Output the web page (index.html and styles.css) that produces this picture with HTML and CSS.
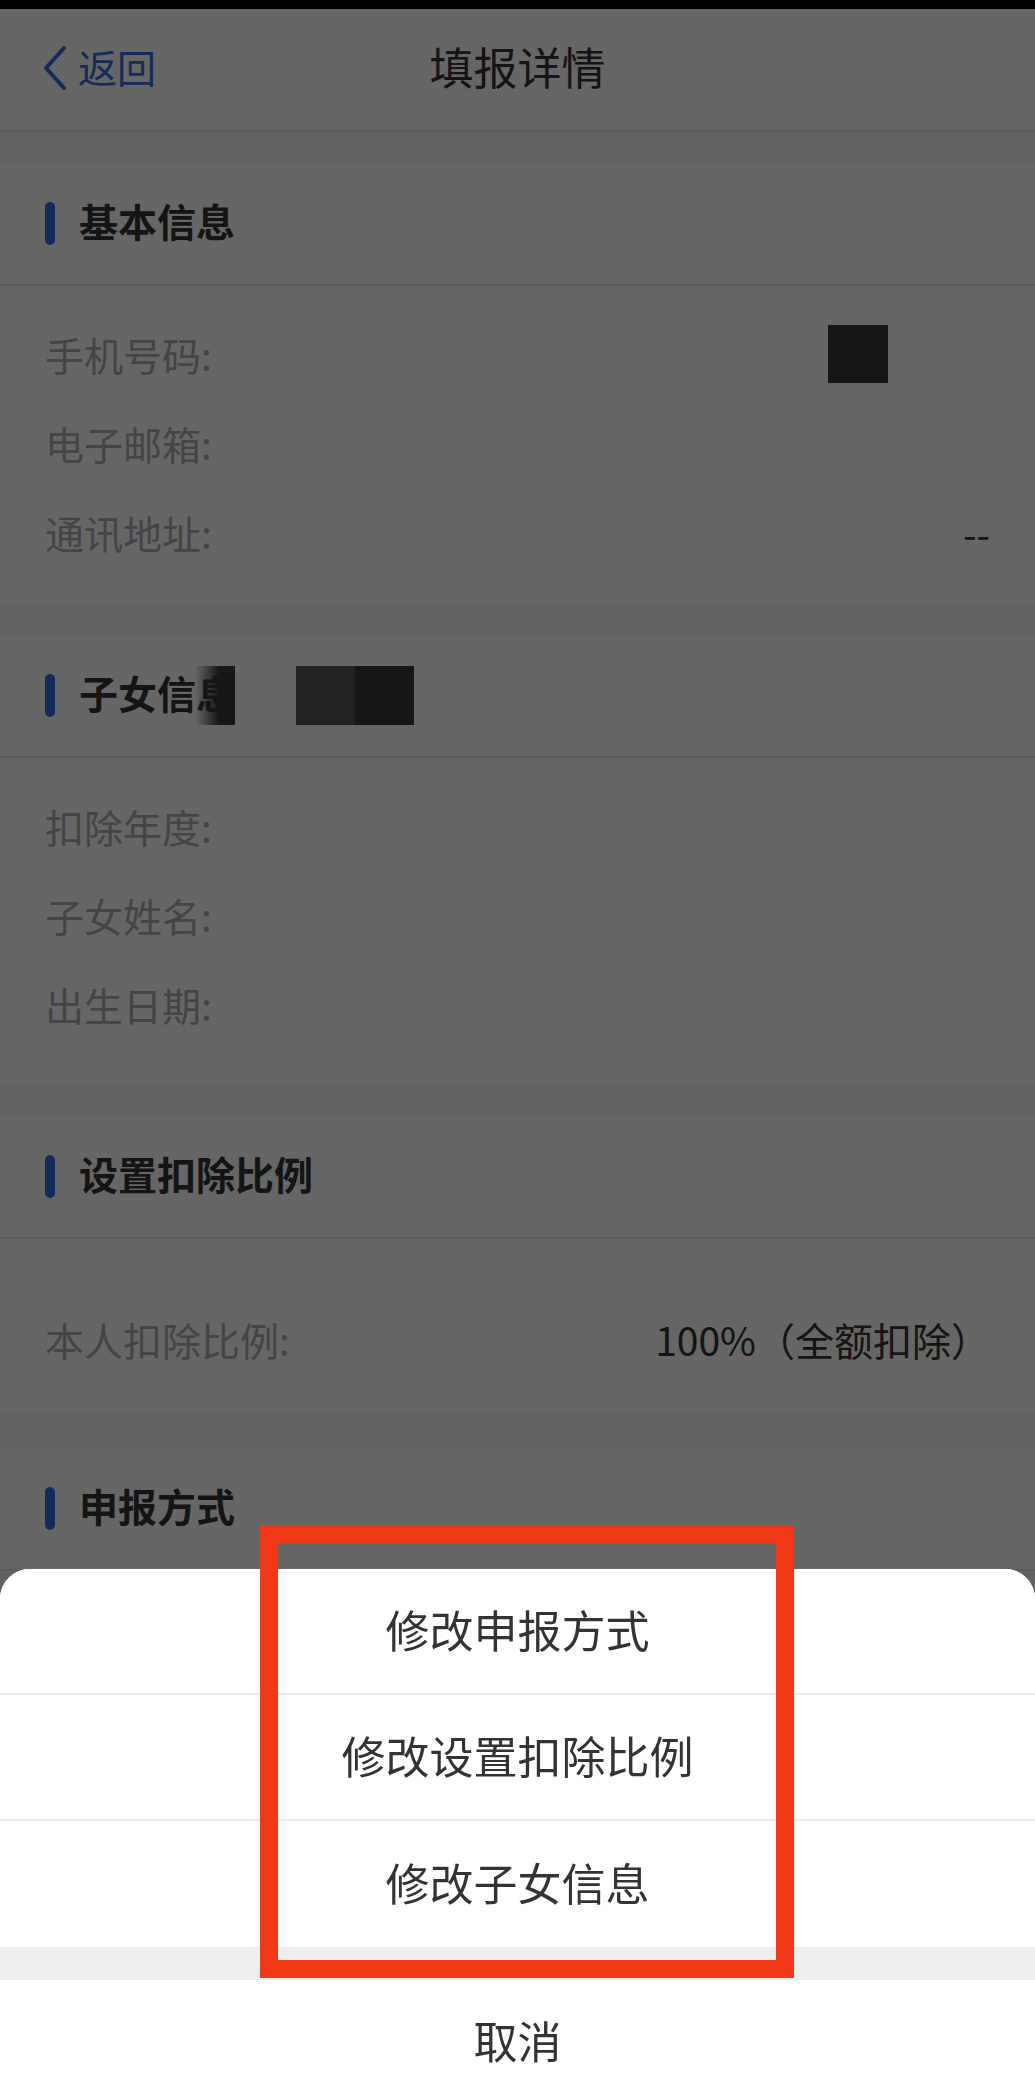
FILE: index.html
```html
<!DOCTYPE html>
<html lang="zh-CN">
<head>
    <meta charset="UTF-8">
    <meta name="viewport" content="width=device-width, initial-scale=1.0">
    <title>填报详情</title>
    <link rel="stylesheet" href="styles.css">
</head>
<body>
    <div class="status-bar"></div>
    <header class="nav">
        <a class="nav-back" href="#">
            <svg viewBox="0 0 24 46" width="24" height="46"><polyline points="21,3 3,23 21,43" /></svg>
            <span>返回</span>
        </a>
        <h1 class="nav-title">填报详情</h1>
        <span></span>
    </header>

    <section class="card">
        <div class="card-head"><i class="bar"></i><h2>基本信息</h2></div>
        <div class="card-body">
            <div class="row"><span class="label">手机号码:</span><span class="value"><i class="mosaic mosaic-phone"></i></span></div>
            <div class="row"><span class="label">电子邮箱:</span><span class="value"></span></div>
            <div class="row"><span class="label">通讯地址:</span><span class="value">--</span></div>
        </div>
    </section>

    <section class="card card-child">
        <div class="card-head">
            <i class="bar"></i><h2>子女信息</h2>
            <i class="mosaic mosaic-fade"></i>
            <i class="mosaic mosaic-name"></i>
        </div>
        <div class="card-body">
            <div class="row"><span class="label">扣除年度:</span><span class="value"></span></div>
            <div class="row"><span class="label">子女姓名:</span><span class="value"></span></div>
            <div class="row"><span class="label">出生日期:</span><span class="value"></span></div>
        </div>
    </section>

    <section class="card card-ratio">
        <div class="card-head"><i class="bar"></i><h2>设置扣除比例</h2></div>
        <div class="card-body">
            <div class="row"><span class="label">本人扣除比例:</span><span class="value">100%（全额扣除）</span></div>
        </div>
    </section>

    <section class="card card-way">
        <div class="card-head"><i class="bar"></i><h2>申报方式</h2></div>
    </section>

    <!-- action sheet over a dimmed page -->
    <div class="mask"></div>
    <div class="action-sheet">
        <ul class="sheet-list">
            <li>修改申报方式</li>
            <li>修改设置扣除比例</li>
            <li>修改子女信息</li>
        </ul>
        <div class="sheet-cancel">取消</div>
    </div>

    <div class="mark-box"></div>
</body>
</html>
```

FILE: styles.css
```css
* {
    box-sizing: border-box;
}

body {
    margin: 0;
    background: #f5f5f5;
    font-family: "Noto Sans CJK SC", "Noto Sans", sans-serif;
    color: #333;
}

.status-bar {
    height: 9px;
    background: #000;
}

.nav {
    display: grid;
    grid-template-columns: 1fr auto 1fr;
    align-items: center;
    height: 123px;
    padding: 0 43px 8px;
    background: #fff;
    border-bottom: 2px solid #e4e4e4;
}

.nav-back {
    display: flex;
    align-items: center;
    color: #2f6de0;
    text-decoration: none;
    font-size: 39px;
}

.nav-back svg {
    margin-right: 11px;
    margin-top: 4px;
}

.nav-back polyline {
    fill: none;
    stroke: #2f6de0;
    stroke-width: 4;
    stroke-linecap: round;
    stroke-linejoin: round;
}

.nav-title {
    margin: 0;
    font-size: 44px;
    font-weight: 400;
    color: #333;
}

.card {
    margin-top: 30px;
    background: #fff;
}

.card-child {
    margin-top: 28px;
}

.card-way {
    margin-top: 34px;
}

.card-head {
    display: flex;
    align-items: center;
    height: 124px;
    padding-left: 45px;
    border-bottom: 2px solid #e6e6e6;
}

.bar {
    width: 10px;
    height: 43px;
    border-radius: 5px;
    background: #2f6de0;
}

.card-head h2 {
    margin: 0 0 6px 24px;
    font-size: 39px;
    font-weight: 700;
    color: #333;
}

.card-body {
    padding: 26px 45px 27px;
}

.card-child .card-body {
    padding-bottom: 34px;
}

.card-ratio .card-body {
    padding-top: 58px;
}

.row {
    display: flex;
    align-items: center;
    justify-content: space-between;
    height: 89px;
    padding-bottom: 5px;
    font-size: 39px;
}

.label {
    color: #aaa;
}

.value {
    display: flex;
    align-items: center;
    color: #333;
}

/* redacted bits of the screenshot */
.mosaic {
    display: block;
    height: 59px;
}

.mosaic-phone {
    width: 60px;
    height: 58px;
    margin-right: 102px;
    background: #373737;
}

.mosaic-fade {
    width: 40px;
    margin-left: -40px;
    background: linear-gradient(to right, rgba(255, 255, 255, 0), #3a3a3a 60%);
}

.mosaic-name {
    width: 118px;
    margin-left: 61px;
    background: linear-gradient(to right, #555 50%, #373737 50%);
}

.mask {
    position: fixed;
    top: 0;
    left: 0;
    right: 0;
    bottom: 0;
    background: rgba(0, 0, 0, 0.6);
}

.action-sheet {
    position: fixed;
    left: 0;
    right: 0;
    bottom: 0;
    overflow: hidden;
    background: #efeff1;
    border-radius: 30px 30px 0 0;
}

.sheet-list {
    list-style: none;
    margin: 0;
    padding: 0;
    background: #fff;
}

.sheet-list li,
.sheet-cancel {
    display: flex;
    align-items: center;
    justify-content: center;
    font-size: 44px;
    color: #333;
    background: #fff;
}

.sheet-list li {
    height: 126px;
    padding-bottom: 4px;
    border-bottom: 2px solid #ececec;
}

.sheet-list li:last-child {
    border-bottom: none;
}

.sheet-cancel {
    height: 116px;
    margin-top: 33px;
    padding-top: 4px;
}

.mark-box {
    position: absolute;
    left: 260px;
    top: 1525px;
    width: 534px;
    height: 453px;
    border: 18px solid #f03a17;
}
```
